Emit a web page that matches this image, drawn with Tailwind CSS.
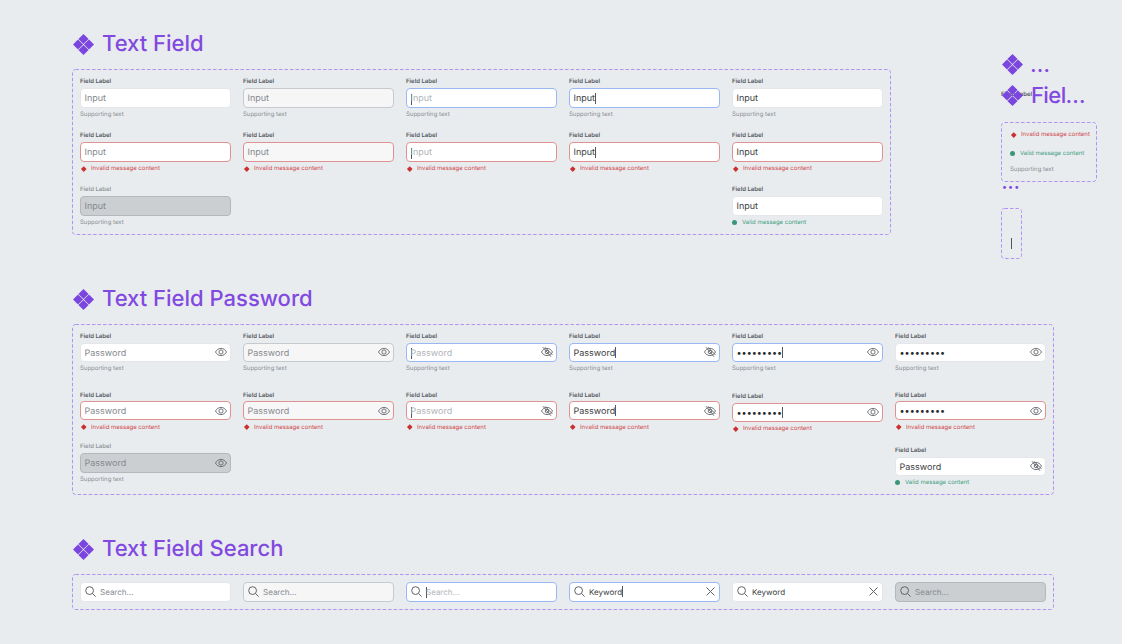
<!DOCTYPE html>
<html lang="en">

<head>
    <meta charset="UTF-8" />
    <title>Text Field</title>
    <script src="https://cdn.jsdelivr.net/npm/@tailwindcss/browser@4"></script>
</head>

<body class="bg-[#e9ecef] font-['Inter',sans-serif] [text-rendering:geometricPrecision] overflow-hidden">
    <div class="relative w-[1122px] h-[644px] overflow-hidden">
        <main id="main" class="pl-[72px] pt-[25px]"></main>

        <!-- 右側のはみ出したコンポーネント -->
        <aside id="aside"></aside>
    </div>

    <script>
        const logo = (cls) => `<svg class="${cls}" viewBox="0 0 21 21" fill="#7b45e0">
            <path d="M10.5 0 15.6 5.1 10.5 10.1 5.4 5.1Z"/><path d="M5 5.4 10.1 10.5 5 15.6 -.1 10.5Z"/>
            <path d="M16 5.4 21.1 10.5 16 15.6 10.9 10.5Z"/><path d="M10.5 10.9 15.6 15.9 10.5 21 5.4 15.9Z"/></svg>`;

        const eye = `<svg class="w-3 h-3 shrink-0" viewBox="0 0 24 24" fill="none" stroke="#5f6368" stroke-width="1.8">
            <path d="M1 12C3.5 7.5 7.3 4.8 12 4.8S20.5 7.5 23 12C20.5 16.5 16.7 19.2 12 19.2S3.5 16.5 1 12Z"/><circle cx="12" cy="12" r="4.2"/></svg>`;
        const eyeOff = `<svg class="w-3 h-3 shrink-0" viewBox="0 0 24 24" fill="none" stroke="#5f6368" stroke-width="1.8">
            <path d="M1 12C3.5 7.5 7.3 4.8 12 4.8S20.5 7.5 23 12C20.5 16.5 16.7 19.2 12 19.2S3.5 16.5 1 12Z"/><circle cx="12" cy="12" r="3.6"/><path d="M4 2.5 20 21.5M8 2.5 23 18"/></svg>`;
        const search = `<svg class="w-[11px] h-[11px] shrink-0" viewBox="0 0 11 11" fill="none" stroke="#5f6368" stroke-width="1"><circle cx="4.6" cy="4.6" r="3.9"/><path d="M7.5 7.5 10.6 10.6"/></svg>`;
        const close = `<svg class="w-[9px] h-[9px] shrink-0" viewBox="0 0 9 9" fill="none" stroke="#5f6368" stroke-width="1"><path d="M.5.5 8.5 8.5M8.5.5.5 8.5"/></svg>`;
        const caret = `<span class="inline-block w-px h-[11px] bg-[#53575c] align-middle"></span>`;
        const dashed = `<svg class="absolute inset-0 w-full h-full pointer-events-none" fill="none"><rect class="w-[calc(100%-1px)] h-[calc(100%-1px)]" x="0.5" y="0.5" rx="3" stroke="#b293f5" stroke-dasharray="3.5 2"/></svg>`;

        const box = {
            normal: "bg-white border-[#e4e6e9]",
            filled: "bg-[#f6f6f7] border-[#c6c9cd]",
            focus: "bg-white border-[#9ab8f3]",
            error: "bg-white border-[#e09292]",
            errorFilled: "bg-[#f7f7f8] border-[#e09292]",
            disabled: "bg-[#cbcfd2] border-[#b4b8bc]",
        };
        const textCls = {
            hint: "text-[#85898e]",
            hintLight: "text-[#b1b4b8]",
            value: "text-[#3a3e43]",
        };

        const foot = {
            support: `<p class="h-2 text-[6px] leading-[10px] text-[#8c9095]">Supporting text</p>`,
            invalid: `<p class="h-2 pt-[2px] flex items-center text-[6px] leading-[8px] text-[#cf4a4e]"><span class="w-[11px] pl-[1.5px] -mt-px shrink-0"><span class="block w-[3.5px] h-[3.5px] rotate-45 bg-[#c9302f]"></span></span>Invalid message content</p>`,
            valid: `<p class="h-2 pt-[2px] flex items-center text-[6px] leading-[8px] text-[#46a07f]"><span class="w-[10px] -mt-px shrink-0"><span class="block w-[5px] h-[5px] rounded-full bg-[#3a9676]"></span></span>Valid message content</p>`,
        };

        // ラベル付きフィールド1つ分（compact はパスワード欄の 19px 高）
        function field({ state = "normal", text = "Input", tone = "hint", cursor = "", icon = "", bottom = "support", mb = 0, off = false, dots = false, compact = false }) {
            const content = dots
                ? `<span class="pt-[2px] text-[9px] text-[#25282c]">•••••••••</span>`
                : `<span class="pt-[2px] text-[9px] ${textCls[tone]}">${text}</span>`;
            return `<div style="margin-bottom:${mb}px">
                <p class="h-2 ${compact ? "mb-[2.75px]" : "mb-[3px]"} text-[6px] leading-[10px] font-semibold ${off ? "text-[#94989d]" : "text-[#55595e]"}">Field Label</p>
                <div class="relative ${compact ? "h-[19px]" : "h-5"} flex items-center justify-between pl-[3.5px] pr-[3px] border rounded-[4px] ${box[state]}">
                    <span class="flex items-center whitespace-nowrap">${cursor === "before" ? `<span class="-mr-px">${caret}</span>` : ""}${content}${cursor === "after" ? caret : ""}</span>
                    ${icon}
                </div>
                <div class="${compact ? "mt-[2.25px]" : "mt-[2px]"}">${foot[bottom]}</div>
            </div>`;
        }

        function searchBox({ state = "normal", text = "Search...", tone = "hint", cursor = "", clear = false }) {
            return `<div class="w-[151px] h-[19.5px] flex items-center pl-[4px] pr-[4px] border rounded-[4px] ${box[state]}">
                ${search}
                <span class="ml-[4px] flex-1 flex items-center text-[8px] whitespace-nowrap ${textCls[tone]}">${cursor === "before" ? `<span class="-mr-px">${caret}</span>` : ""}${text}${cursor === "after" ? caret : ""}</span>
                ${clear ? close : ""}
            </div>`;
        }

        const column = (fields) => `<div class="w-[151px] shrink-0">${fields.join("")}</div>`;

        const section = (title, frameCls, inner) => `<section>
            <h2 class="h-9 pt-[2px] mb-2 flex items-center text-[22px] font-medium text-[#8249e0] whitespace-nowrap">${logo("w-[21px] h-[21px] ml-px mr-2")}${title}</h2>
            <div class="relative flex gap-3 ${frameCls}">${dashed}${inner}</div>
        </section>`;

        const P = { text: "Password", compact: true };
        const D = { dots: true, compact: true };
        const V = { tone: "value" };

        const textField = [
            column([field({ mb: 13 }), field({ state: "error", bottom: "invalid", mb: 13 }), field({ state: "disabled", off: true, tone: "hint" })]),
            column([field({ state: "filled", mb: 13 }), field({ state: "errorFilled", bottom: "invalid" })]),
            column([field({ state: "focus", tone: "hintLight", cursor: "before", mb: 13 }), field({ state: "error", tone: "hintLight", cursor: "before", bottom: "invalid" })]),
            column([field({ state: "focus", ...V, cursor: "after", mb: 13 }), field({ state: "error", ...V, cursor: "after", bottom: "invalid" })]),
            column([field({ ...V, mb: 13 }), field({ state: "error", ...V, bottom: "invalid", mb: 13 }), field({ ...V, bottom: "valid" })]),
        ].join("");

        const password = [
            column([field({ ...P, icon: eye, mb: 18.5 }), field({ ...P, state: "error", icon: eye, bottom: "invalid", mb: 11.5 }), field({ ...P, compact: false, state: "disabled", off: true, icon: eye })]),
            column([field({ ...P, state: "filled", icon: eye, mb: 18.5 }), field({ ...P, state: "errorFilled", icon: eye, bottom: "invalid" })]),
            column([field({ ...P, state: "focus", tone: "hintLight", cursor: "before", icon: eyeOff, mb: 18.5 }), field({ ...P, state: "error", tone: "hintLight", cursor: "before", icon: eyeOff, bottom: "invalid" })]),
            column([field({ ...P, ...V, state: "focus", cursor: "after", icon: eyeOff, mb: 18.5 }), field({ ...P, ...V, state: "error", cursor: "after", icon: eyeOff, bottom: "invalid" })]),
            column([field({ ...D, state: "focus", cursor: "after", icon: eye, mb: 20 }), field({ ...D, state: "error", cursor: "after", icon: eye, bottom: "invalid" })]),
            column([field({ ...D, icon: eye, mb: 18.5 }), field({ ...D, state: "error", icon: eye, bottom: "invalid", mb: 15.5 }), field({ ...P, ...V, icon: eyeOff, bottom: "valid" })]),
        ].join("");

        const searchRow = [
            searchBox({}),
            searchBox({ state: "filled" }),
            searchBox({ state: "focus", tone: "hintLight", cursor: "before" }),
            searchBox({ state: "focus", text: "Keyword", ...V, cursor: "after", clear: true }),
            searchBox({ text: "Keyword", ...V, clear: true }),
            searchBox({ state: "disabled" }),
        ].join("");

        document.getElementById("main").innerHTML = [
            section("Text Field", "w-[819px] h-[166px] px-[8px] pt-[8px]", textField),
            `<div class="h-[45px]"></div>`,
            section("Text Field Password", "w-[982px] h-[171px] px-[8px] pt-[8px]", password),
            `<div class="h-[35px]"></div>`,
            section("Text Field Search", "w-[982px] h-9 px-[8px] pt-[8px]", searchRow),
        ].join("");

        document.getElementById("aside").innerHTML = `
            ${logo("absolute left-[1002px] top-[54px] w-[21px] h-[21px]")}
            <span class="absolute left-[1030px] top-[50px] text-[22px] leading-[30px] font-medium text-[#8249e0]">…</span>
            <span class="absolute left-[1001px] top-[91px] text-[6px] leading-[8px] font-semibold text-[#55595e]">Field Label</span>
            ${logo("absolute left-[1002px] top-[85px] w-[21px] h-[21px]")}
            <span class="absolute left-[1031px] top-[78px] text-[22px] leading-9 font-medium tracking-[-0.6px] text-[#8249e0]">Fiel…</span>
            <div class="absolute left-[1001px] top-[122px] w-[96px] h-[60px] pl-[9px] pt-[8px]">
                ${dashed}
                ${foot.invalid}
                <div class="h-[11px]"></div>
                ${foot.valid}
                <div class="h-2"></div>
                ${foot.support}
            </div>
            <span class="absolute left-[1002px] top-[180px] text-[9px] leading-4 tracking-[1px] text-[#7b45e0]">•••</span>
            <div class="absolute left-[1001px] top-[208px] w-[21px] h-[51px] flex justify-center pt-[30px]">
                ${dashed}
                <span class="block w-px h-[11px] bg-[#53575c]"></span>
            </div>`;
    </script>
</body>

</html>
